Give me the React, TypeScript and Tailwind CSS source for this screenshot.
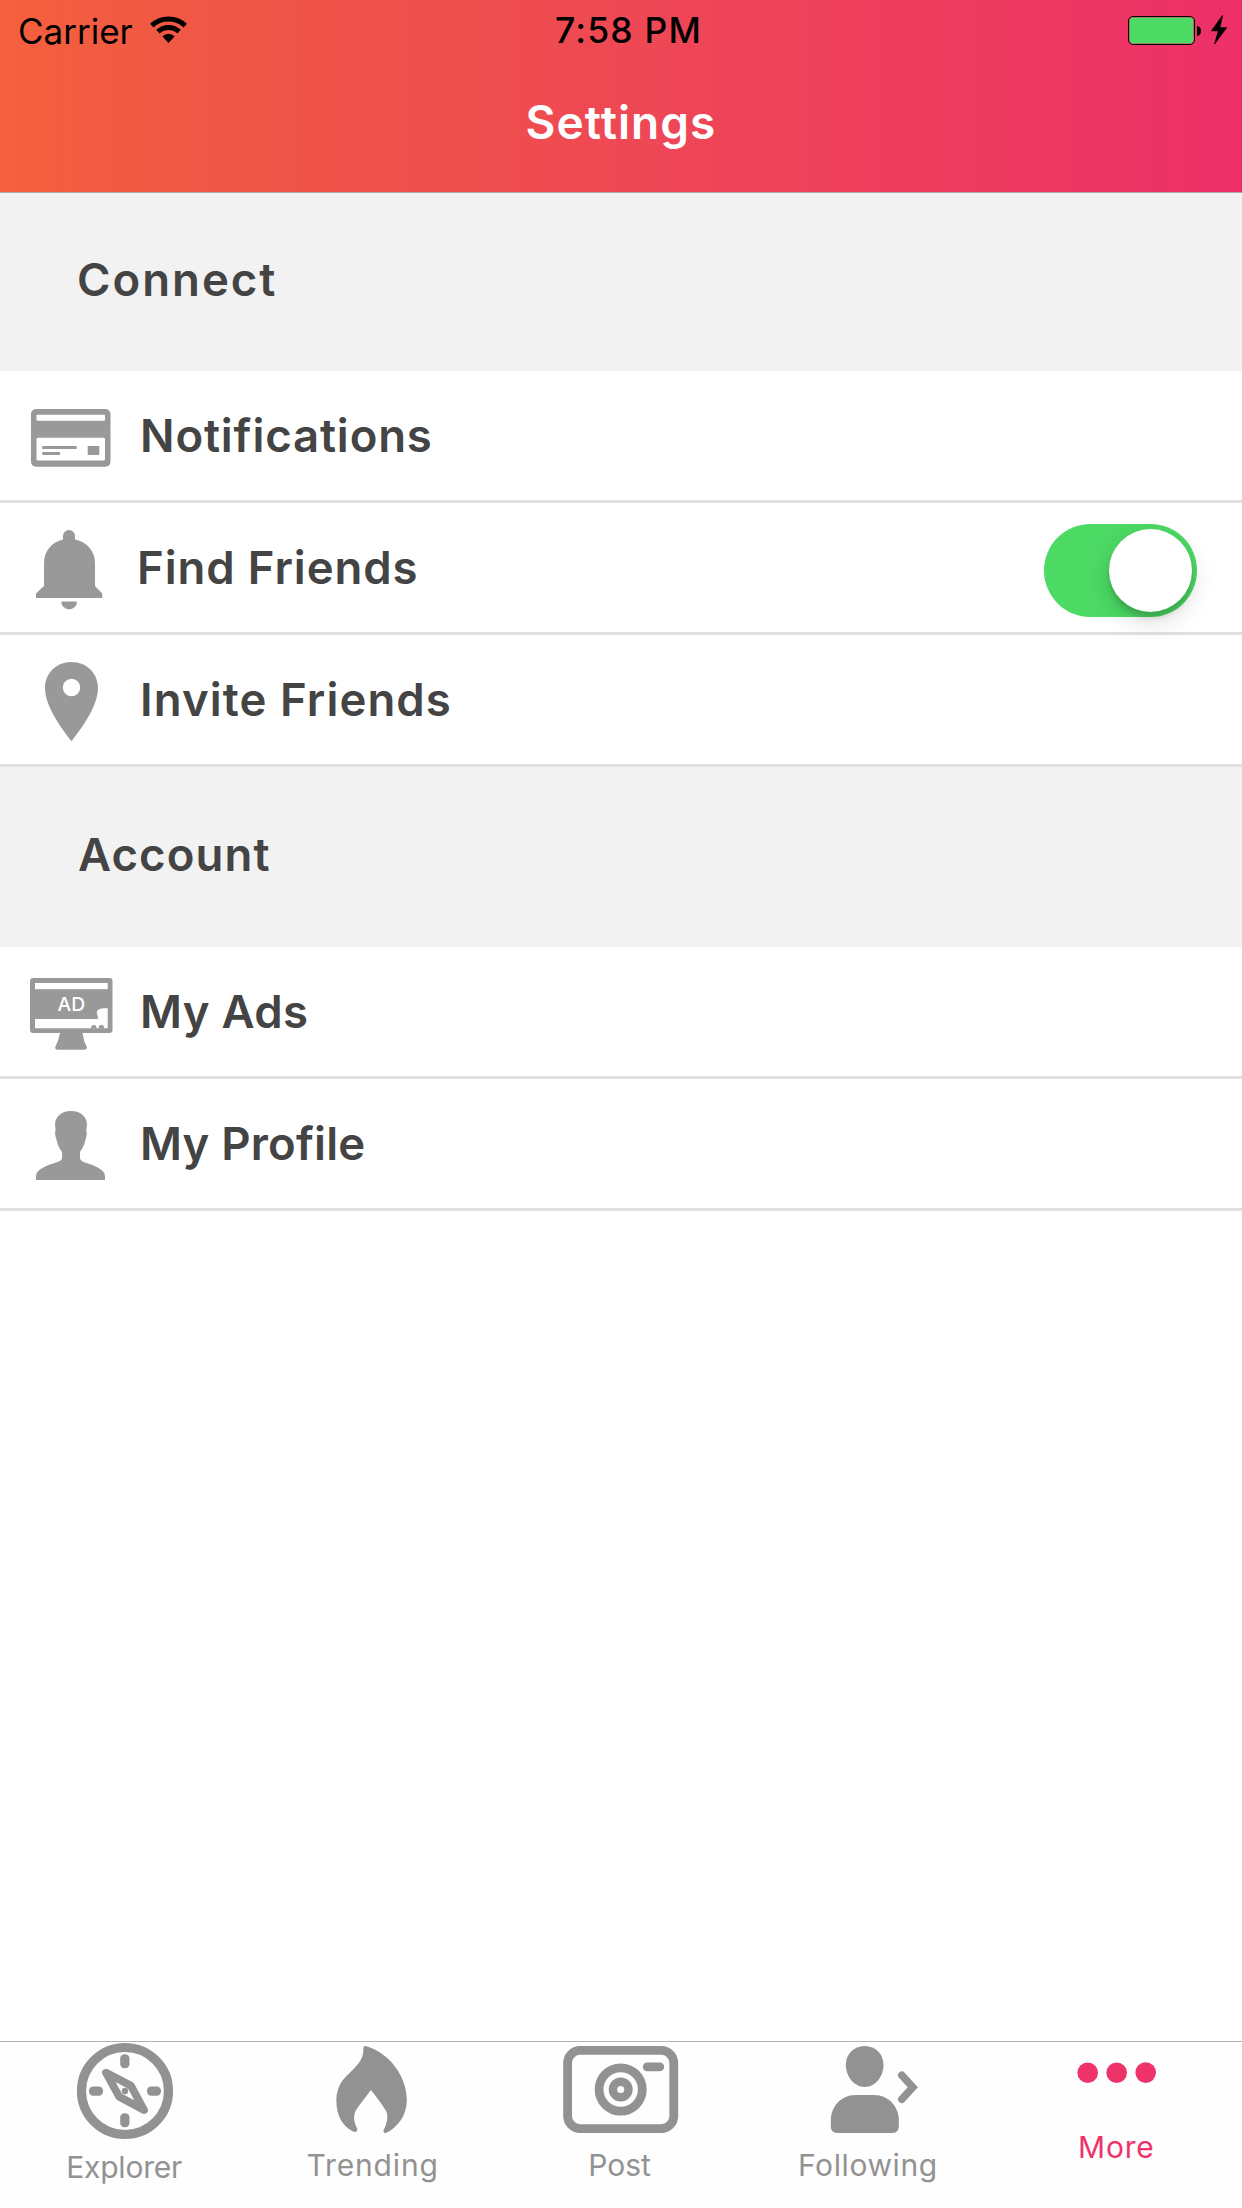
import { ReactNode } from "react"

type RowProps = {
  label: string
  icon: ReactNode
  textClass: string
  children?: ReactNode
}

const StatusBar = () => (
  <div className="h-[60px] w-full grid grid-cols-3 grid-rows-[60px] items-center text-black text-[35px] leading-[60px]">
    <div className="flex items-center pl-[18px]">
      <span className="w-[117px] pt-[2px]">Carrier</span>
      <svg className="ml-[15px] w-[38px] h-[60px]" viewBox="150 0 38 60">
        <g fill="none" stroke="#000" strokeWidth="5">
          <path d="M151.8 25.6 A24.3 24.3 0 0 1 185.2 25.6" />
          <path d="M157.9 31.6 A15.6 15.6 0 0 1 179.1 31.6" />
        </g>
        <path d="M168.5 43 L162.3 36.3 Q168.5 31.3 174.7 36.3 Z" />
      </svg>
    </div>
    <span className="text-center font-medium pl-[15px] pt-[2px] text-[35.5px] tracking-[1.2px]">
      7:58 PM
    </span>
    <div className="flex justify-end">
      <svg className="w-[122px] h-[60px]" viewBox="1120 0 122 60">
        <rect x="1128.5" y="16.5" width="66" height="28" rx="4.5" fill="none" stroke="#000" />
        <rect x="1129.6" y="17.6" width="63.8" height="25.8" rx="3.6" fill="#4cd964" />
        <path d="M1197 26 Q1201 26.5 1201 31 Q1201 35.5 1197 36 Z" />
        <path
          d="M1222.5 15.5 L1211.5 30.8 H1218.4 L1214.6 44 L1226.6 27.7 H1219.8 Z"
          stroke="#000"
          strokeWidth="0.8"
        />
      </svg>
    </div>
  </div>
)

const CardIcon = () => (
  <>
    <rect x="31" y="38" width="79.5" height="57.7" rx="5" />
    <rect x="36.5" y="43.8" width="68.5" height="6" rx="1" fill="#fff" />
    <rect x="36.5" y="66.8" width="68.5" height="22.6" rx="1.5" fill="#fff" />
    <rect x="42.3" y="75" width="34.4" height="3" />
    <rect x="42.3" y="81" width="17.7" height="3" />
    <rect x="87.7" y="75" width="11.6" height="9" />
  </>
)

const BellIcon = () => (
  <>
    <path d="M63 36.5 V33 A6 6 0 0 1 75 33 V36.5 C87 39 95 48 95 60 V83 L102.3 90.5 V95 H36 V90.5 L44 83 V60 C44 48 52 39 63 36.5 Z" />
    <path d="M61.3 98.4 H77 A7.85 8 0 0 1 61.3 98.4 Z" />
  </>
)

const PinIcon = () => (
  <path
    fillRule="evenodd"
    d="M71.5 27 C87 27 98 38.5 98 53 C98 70 84 90 71.5 106.3 C59 90 45 70 45 53 C45 38.5 56 27 71.5 27 Z M71.5 43.8 A8.7 8.7 0 1 0 71.5 61.2 A8.7 8.7 0 1 0 71.5 43.8 Z"
  />
)

const AdsIcon = () => (
  <>
    <rect x="30" y="31" width="82.5" height="55" rx="3" />
    <path d="M60 86 H82.5 Q83.5 94 86.8 100 Q87 102.7 84.5 102.7 H57.5 Q55 102.7 55.2 100 Q58.5 94 60 86 Z" />
    <rect x="35" y="36" width="72.7" height="6.2" fill="#fff" />
    <path d="M35 72 H97.5 Q98.5 70.5 97.3 68 C95.5 63 99 60.5 107.7 61.3 V81.2 H35 Z" fill="#fff" />
    <path d="M91 81.5 A2.8 3.4 0 0 1 96.6 81.5 Z M98.6 81.5 A2.8 3.4 0 0 1 104.2 81.5 Z" />
    <text x="71.3" y="64.2" textAnchor="middle" fill="#fff" fontSize="19.3" fontWeight="500">
      AD
    </text>
  </>
)

const ProfileIcon = () => (
  <path d="M71 32 C81 32 87 38 87 46 L86.3 51 Q87.4 54 86 59 C85 62 84.5 67 80 73 V79 Q80 81.5 83 82.7 C94 86.5 105 90 105 97 V101 H36 V97 C36 90 47 86.5 58 82.7 Q62 81.5 62 79 V73 C57.5 67 57 62 56 59 Q54.4 54 55.6 51 L55 46 C55 38 61 32 71 32 Z" />
)

const SectionTitle = ({ label, textClass }: { label: string; textClass: string }) => (
  <h2
    className={
      "bg-[#f2f2f2] flex items-center pb-1 text-[45.5px] leading-none font-semibold " + textClass
    }
  >
    {label}
  </h2>
)

const Row = ({ label, icon, textClass, children }: RowProps) => (
  <li className="h-[132px] flex items-center bg-white border-b-[3px] border-[#e0e0e0]">
    <svg className="w-[140px] h-[129px] shrink-0 fill-[#999]" viewBox="0 0 140 129">
      {icon}
    </svg>
    <span className={"text-[45.5px] leading-none font-semibold whitespace-nowrap " + textClass}>
      {label}
    </span>
    {children}
  </li>
)

const Toggle = () => (
  <button
    role="switch"
    aria-checked="true"
    className="ml-auto mr-[45px] mt-[6px] w-[153px] h-[93px] rounded-full bg-[#4cd964] flex items-center justify-end pr-[5px]"
  >
    <span className="w-[83px] h-[83px] rounded-full bg-white shadow-[0_9px_24px_rgba(0,0,0,0.15),0_6px_5px_rgba(0,0,0,0.13)]" />
  </button>
)

const CompassIcon = () => (
  <>
    <circle cx="125" cy="49" r="43.5" fill="none" stroke="#929292" strokeWidth="9.2" />
    <rect x="120.2" y="12.3" width="9.3" height="14" rx="4.2" />
    <rect x="120.2" y="71.3" width="9.3" height="14" rx="4.2" />
    <rect x="89" y="44.4" width="14" height="9.3" rx="4.2" />
    <rect x="147" y="44.4" width="14" height="9.3" rx="4.2" />
    <path
      d="M106 30.6 L131 43.8 L144 68 L119.3 54.8 Z"
      fill="none"
      stroke="#929292"
      strokeWidth="7.8"
      strokeLinejoin="round"
    />
    <circle cx="125" cy="49" r="3.2" />
  </>
)

const FlameIcon = () => (
  <path d="M116 4 C140 11 157 34 157.3 58 C157 74 148 85 137 90.8 C134 91.8 133 89 135 86 C138.3 79 139 72 135.5 67.5 C131 60 126 54 121.3 48 C117 54 111 61 106.5 68 C103.5 73 104 80 107.5 86.5 C108.2 89.5 106 91 103 89.3 C93 84 86.7 74 86.7 58 C87 45 93 37 99.5 31.5 C107 24 114 18 113.8 7 C113.8 4.3 114.5 3.6 116 4 Z" />
)

const CameraIcon = () => (
  <>
    <g fill="none" stroke="#929292" strokeWidth="8.8">
      <rect x="67.4" y="8.4" width="106.2" height="78.2" rx="12.6" />
      <circle cx="120.5" cy="47.5" r="21.6" />
      <circle cx="120.5" cy="47.5" r="7.8" strokeWidth="8.4" />
    </g>
    <rect x="142.6" y="20.4" width="21.4" height="8.8" rx="4.4" />
  </>
)

const FollowingIcon = () => (
  <>
    <path d="M114.8 4 C126 4 133.7 12.5 133.7 23 C133.7 34 126 45 114.8 45 C104 45 96 34 96 23 C96 12.5 104 4 114.8 4 Z" />
    <path d="M106 53 H124 C140 53 149 66 149 78 V84.5 Q149 91 142.5 91 H87.5 Q81 91 81 84.5 V78 C81 66 90 53 106 53 Z" />
    <path
      d="M152 33.2 L163 45.2 L152 57.2"
      fill="none"
      stroke="#929292"
      strokeWidth="7.6"
      strokeLinecap="round"
    />
  </>
)

const MoreIcon = () => (
  <g fill="#ed3369">
    <circle cx="87.3" cy="30.8" r="10.3" />
    <circle cx="116.3" cy="30.8" r="10.3" />
    <circle cx="145.3" cy="30.6" r="10.3" />
  </g>
)

const TABS = [
  {
    label: "Explorer",
    icon: <CompassIcon />,
    viewBox: "0 0 248.4 98",
    textClass: "mt-[7px] tracking-[-0.2px]",
  },
  {
    label: "Trending",
    icon: <FlameIcon />,
    viewBox: "-1.6 0 248.4 98",
    textClass: "mt-[5px] tracking-[0.85px]",
  },
  {
    label: "Post",
    icon: <CameraIcon />,
    viewBox: "-3.2 0 248.4 98",
    textClass: "mt-[5px] pr-[3px]",
  },
  {
    label: "Following",
    icon: <FollowingIcon />,
    viewBox: "-4.8 0 248.4 98",
    textClass: "mt-[5px] pr-[3px] tracking-[0.6px]",
  },
  {
    label: "More",
    icon: <MoreIcon />,
    viewBox: "-6.4 0 248.4 98",
    textClass: "-mt-[13px] pr-[3px] tracking-[0.8px] text-[#ed3369]",
  },
]

const App = () => {
  return (
    <div className="w-[1242px] h-[2208px] flex flex-col bg-white text-[#444] font-['Inter',sans-serif]">
      <header className="h-[193px] shrink-0 bg-[linear-gradient(to_right,#f5603d,#f05844_170px,#ef4d4f_500px,#ee4557_700px,#ed3563_1100px,#ed3069)] border-b border-[#a9a9a9]">
        <StatusBar />
        <h1 className="text-center text-white text-[46px] leading-[125px] font-semibold tracking-[1.05px]">
          Settings
        </h1>
      </header>

      <section>
        <SectionTitle label="Connect" textClass="h-[178px] pl-[77px] tracking-[2px]" />
        <ul>
          <Row label="Notifications" icon={<CardIcon />} textClass="tracking-[0.85px]" />
          <Row label="Find Friends" icon={<BellIcon />} textClass="-ml-[3px] tracking-[0.9px]">
            <Toggle />
          </Row>
          <Row label="Invite Friends" icon={<PinIcon />} textClass="tracking-[1.1px]" />
        </ul>
      </section>

      <section>
        <SectionTitle label="Account" textClass="h-[180px] pl-[78px] tracking-[1.1px]" />
        <ul>
          <Row label="My Ads" icon={<AdsIcon />} textClass="tracking-[0.3px]" />
          <Row label="My Profile" icon={<ProfileIcon />} textClass="tracking-[0.2px]" />
        </ul>
      </section>

      <nav className="mt-auto h-[167px] grid grid-cols-5 border-t border-[#b2b2b2] bg-[#fefefe]">
        {TABS.map((tab) => (
          <a key={tab.label} className="flex flex-col items-center text-[#929292]">
            <svg className="w-full h-[98px] fill-[#929292]" viewBox={tab.viewBox}>
              {tab.icon}
            </svg>
            <span className={"text-[30px] leading-[40px] " + tab.textClass}>{tab.label}</span>
          </a>
        ))}
      </nav>
    </div>
  )
}

export default App
